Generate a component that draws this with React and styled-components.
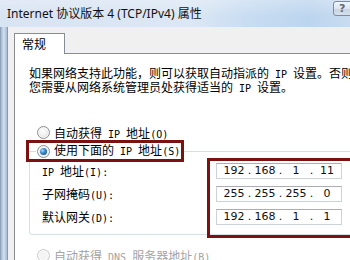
import React from "react";
import styled, { createGlobalStyle } from "styled-components";

const Global = createGlobalStyle`
  html, body { margin: 0; padding: 0; background: #f0f0f0; }
  #root { width: 350px; height: 260px; overflow: hidden; }
`;

const Window = styled.div`
  width: 350px;
  height: 260px;
  display: flex;
  flex-direction: column;
  overflow: hidden;
  font-family: "Noto Sans CJK SC", sans-serif;
  font-size: 12px;
  color: #000;
`;

const TitleBar = styled.div`
  height: 27px;
  flex: none;
  display: flex;
  align-items: flex-start;
  padding-left: 7px;
  background:
    linear-gradient(180deg, rgba(255,255,255,0.25), rgba(255,255,255,0) 60%),
    linear-gradient(90deg, #d8e4f1 0%, #dbe7f4 55%, #c9ddf2 70%, #bcd5ee 88%, #c8dbf0 100%);
`;

const Title = styled.span`
  font-family: "Noto Sans", "Noto Sans CJK SC", sans-serif;
  font-size: 12px;
  line-height: 27px;
  color: #111;
  white-space: nowrap;
`;

const HelpButton = styled.div`
  margin-left: auto;
  margin-right: -4px;
  margin-top: 1px;
  width: 21px;
  height: 15px;
  box-sizing: border-box;
  border: 1px solid #7d8c9f;
  border-radius: 3px;
  background: linear-gradient(180deg, #f1f5fa 0%, #dde6f0 50%, #c5d2e0 51%, #d6e1ec 100%);
  color: #5f6877;
  font-family: "DejaVu Sans", sans-serif;
  font-weight: bold;
  font-size: 11px;
  line-height: 13px;
  padding-left: 5px;
`;

const Body = styled.div`
  flex: 1;
  display: flex;
  min-height: 0;
`;

const Frame = styled.div`
  width: 7px;
  flex: none;
  background: linear-gradient(90deg, #8396ad 0, #b7cadf 2px, #d3e1f0 4px, #aec3da 6px);
`;

const Client = styled.div`
  flex: 1;
  min-width: 0;
  display: flex;
  flex-direction: column;
  background: #f0f0f0;
  border-left: 1px solid #8898ad;
  padding: 6px 0 0 6px;
  overflow: hidden;
`;

const TabStrip = styled.div`
  display: flex;
`;

const Tab = styled.div`
  width: 51px;
  height: 21px;
  box-sizing: border-box;
  background: #fff;
  border: 1px solid #898c95;
  border-bottom: none;
  margin-bottom: -1px;
  position: relative;
  z-index: 1;
  padding-left: 7px;
  line-height: 20px;
`;

const Pane = styled.div`
  flex: 1;
  background: #fff;
  border: 1px solid #898c95;
  margin-right: -60px;
  padding: 13px 0 0 14px;
`;

const Paragraph = styled.p`
  margin: 0;
  line-height: 12px;
  white-space: nowrap;
`;

const Ascii = styled.span`
  font-family: "DejaVu Sans Mono", monospace;
  font-size: 10px;
`;

const RadioRow = styled.div`
  display: flex;
  align-items: center;
  gap: 4px;
  height: 14px;
  margin: ${(p) => p.$top}px 0 0 8px;
  white-space: nowrap;
  color: ${(p) => (p.$disabled ? "#a3a3a3" : "#000")};
`;

const Radio = styled.span`
  width: 13px;
  height: 13px;
  flex: none;
  box-sizing: border-box;
  border-radius: 50%;
  border: 1px solid ${(p) => (p.$disabled ? "#cacaca" : "#8e8f91")};
  background: ${(p) =>
    p.$disabled
      ? "#f4f4f4"
      : "radial-gradient(circle at 45% 40%, #ffffff 0, #ececec 55%, #d2d2d2 100%)"};
  box-shadow: inset 0 0 0 1px ${(p) => (p.$disabled ? "#fafafa" : "#f6f6f6")};
  display: flex;
  align-items: center;
  justify-content: center;
  &::after {
    content: "";
    display: ${(p) => (p.$checked ? "block" : "none")};
    width: 7px;
    height: 7px;
    border-radius: 50%;
    background: radial-gradient(circle at 35% 35%, #a6dcff 0, #3a8ad0 40%, #113f72 100%);
  }
`;

const Group = styled.fieldset`
  margin: 1px 0 0 0;
  padding: 0;
  border: 1px solid #d5dfe5;
  border-radius: 3px;
  min-width: 0;
`;

const Legend = styled.legend`
  margin-left: -4px;
  padding: 1px 1px 1px 0;
  border: 3px solid #7b1111;
  display: flex;
  align-items: center;
  gap: 4px;
  line-height: 12px;
  white-space: nowrap;
  &::before {
    content: "";
    width: 7px;
    height: 1px;
    margin-right: -3px;
    background: #d5dfe5;
  }
`;

const GroupBody = styled.div`
  display: flex;
  padding-left: 12px;
`;

const Labels = styled.div`
  width: 165px;
  flex: none;
  display: flex;
  flex-direction: column;
  gap: 7px;
  padding-top: 1px;
`;

const Label = styled.div`
  height: 16px;
  line-height: 16px;
  white-space: nowrap;
`;

const Highlight = styled.div`
  margin: -4px 0 -4px 0;
  border: 3px solid #7b1111;
  padding: 2px 12px 10px 6px;
  display: flex;
  flex-direction: column;
  gap: 7px;
`;

const IpBox = styled.div`
  width: 126px;
  height: 16px;
  box-sizing: border-box;
  display: flex;
  align-items: center;
  border: 1px solid #cdd2d8;
  border-top-color: #abadb3;
  background: #fff;
  padding-left: 5px;
  font-family: "DejaVu Sans", sans-serif;
  font-size: 11px;
  line-height: 14px;
  color: #111;
`;

const Seg = styled.span`
  width: 24px;
  text-align: center;
`;

const Dot = styled.span`
  width: 7px;
  text-align: center;
`;

function T({ s }) {
  return s.split(/([\x20-\x7e]+)/).map((part, i) =>
    part === "" ? null : /^[\x20-\x7e]+$/.test(part) ? (
      <Ascii key={i}>{part}</Ascii>
    ) : (
      <React.Fragment key={i}>{part}</React.Fragment>
    )
  );
}

function Ip({ value }) {
  const parts = value.split(".");
  return (
    <IpBox>
      {parts.map((p, i) => (
        <React.Fragment key={i}>
          <Seg>{p}</Seg>
          {i < 3 && <Dot>.</Dot>}
        </React.Fragment>
      ))}
    </IpBox>
  );
}

export default function App() {
  return (
    <>
      <Global />
      <Window>
        <TitleBar>
          <Title>Internet 协议版本 4 (TCP/IPv4) 属性</Title>
          <HelpButton>?</HelpButton>
        </TitleBar>
        <Body>
          <Frame />
          <Client>
            <TabStrip>
              <Tab>常规</Tab>
            </TabStrip>
            <Pane>
              <Paragraph>
                <T s="如果网络支持此功能，则可以获取自动指派的 IP 设置。否则，" />
                <br />
                <T s="您需要从网络系统管理员处获得适当的 IP 设置。" />
              </Paragraph>
              <RadioRow $top={30}>
                <Radio />
                <span>
                  <T s="自动获得 IP 地址(O)" />
                </span>
              </RadioRow>
              <Group>
                <Legend>
                  <Radio $checked />
                  <span>
                    <T s="使用下面的 IP 地址(S)" />
                  </span>
                </Legend>
                <GroupBody>
                  <Labels>
                    <Label>
                      <T s="IP 地址(I):" />
                    </Label>
                    <Label>
                      <T s="子网掩码(U):" />
                    </Label>
                    <Label>
                      <T s="默认网关(D):" />
                    </Label>
                  </Labels>
                  <Highlight>
                    <Ip value="192.168.1.11" />
                    <Ip value="255.255.255.0" />
                    <Ip value="192.168.1.1" />
                  </Highlight>
                </GroupBody>
              </Group>
              <RadioRow $top={13} $disabled>
                <Radio $disabled />
                <span>
                  <T s="自动获得 DNS 服务器地址(B)" />
                </span>
              </RadioRow>
            </Pane>
          </Client>
        </Body>
      </Window>
    </>
  );
}
